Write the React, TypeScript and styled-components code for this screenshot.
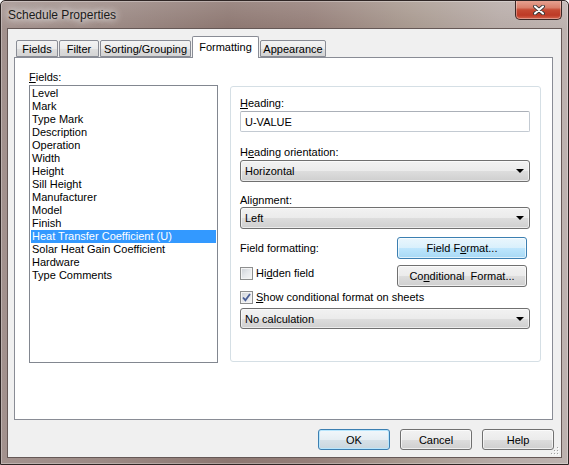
import styled, { createGlobalStyle } from "styled-components";

const GlobalStyle = createGlobalStyle`
  html, body {
    margin: 0;
    padding: 0;
    background: #ffffff;
  }
  body {
    font-family: "Liberation Sans", Arial, sans-serif;
    font-size: 11px;
    color: #000000;
  }
  * {
    box-sizing: border-box;
  }
`;

const fields = [
  "Level",
  "Mark",
  "Type Mark",
  "Description",
  "Operation",
  "Width",
  "Height",
  "Sill Height",
  "Manufacturer",
  "Model",
  "Finish",
  "Heat Transfer Coefficient (U)",
  "Solar Heat Gain Coefficient",
  "Hardware",
  "Type Comments",
];

const tabs = [
  { label: "Fields", width: 42 },
  { label: "Filter", width: 40 },
  { label: "Sorting/Grouping", width: 91 },
  { label: "Formatting", width: 67, active: true },
  { label: "Appearance", width: 66 },
];

const CloseGlyph = () => (
  <svg width="12" height="10" viewBox="0 0 12 10">
    <path d="M2 1.5 L10 8.5 M10 1.5 L2 8.5" stroke="#3a3a3a" strokeWidth="3.8" strokeLinecap="round" />
    <path d="M2 1.5 L10 8.5 M10 1.5 L2 8.5" stroke="#ffffff" strokeWidth="2.1" strokeLinecap="round" />
  </svg>
);

const CheckMark = () => (
  <svg width="9" height="9" viewBox="0 0 9 9">
    <path d="M1 4.5 L3.4 7.2 L8 1" stroke="#4a5f97" strokeWidth="1.8" fill="none" />
  </svg>
);

const Grip = () => (
  <svg width="10" height="10" viewBox="0 0 10 10">
    {[
      [8, 2],
      [5, 5],
      [8, 5],
      [2, 8],
      [5, 8],
      [8, 8],
    ].map(([x, y]) => (
      <g key={`${x}-${y}`}>
        <rect x={x} y={y} width="1" height="1" fill="#ffffff" />
        <rect x={x - 1} y={y - 1} width="1" height="1" fill="#a0a0a0" />
      </g>
    ))}
  </svg>
);

const App = () => {
  return (
    <>
      <GlobalStyle />
      <Window>
        <TitleBar>
          <Title>Schedule Properties</Title>
          <CloseButton>
            <CloseGlyph />
          </CloseButton>
        </TitleBar>
        <Client>
          <TabStrip>
            {tabs.map((t) => (
              <Tab key={t.label} $active={!!t.active} $width={t.width}>
                {t.label}
              </Tab>
            ))}
          </TabStrip>
          <TabPanel>
            <FieldsColumn>
              <Label>
                <Key>F</Key>ields:
              </Label>
              <ListBox>
                {fields.map((f) => (
                  <ListItem key={f} $selected={f === "Heat Transfer Coefficient (U)"}>
                    {f}
                  </ListItem>
                ))}
              </ListBox>
            </FieldsColumn>
            <GroupBox>
              <Label $top={10}>
                <Key>H</Key>eading:
              </Label>
              <TextInput $top={1}>U-VALUE</TextInput>

              <Label $top={14}>
                H<Key>e</Key>ading orientation:
              </Label>
              <Combo $top={1}>
                Horizontal
                <Arrow />
              </Combo>

              <Label $top={12}>Alignment:</Label>
              <Combo $top={0}>
                Left
                <Arrow />
              </Combo>

              <ButtonRow $top={8}>
                <span>Field formatting:</span>
                <PushButton $variant="hover">
                  Field F<Key>o</Key>rmat...
                </PushButton>
              </ButtonRow>

              <ButtonRow $top={6} $alignTop>
                <CheckRow $top={2}>
                  <CheckBox />
                  <span>
                    Hi<Key>d</Key>den field
                  </span>
                </CheckRow>
                <PushButton>
                  Co<Key>n</Key>ditional&nbsp; Format...
                </PushButton>
              </ButtonRow>

              <CheckRow $top={4}>
                <CheckBox>
                  <CheckMark />
                </CheckBox>
                <span>
                  <Key>S</Key>how conditional format on sheets
                </span>
              </CheckRow>

              <Combo $top={4} $height={21}>
                No calculation
                <Arrow />
              </Combo>
            </GroupBox>
          </TabPanel>
          <DialogButtons>
            <DialogButton $default>OK</DialogButton>
            <DialogButton>Cancel</DialogButton>
            <DialogButton>Help</DialogButton>
          </DialogButtons>
          <GripCorner>
            <Grip />
          </GripCorner>
        </Client>
      </Window>
    </>
  );
};

const Window = styled.div`
  width: 569px;
  height: 465px;
  display: flex;
  flex-direction: column;
  border: 1px solid #2f2625;
  border-radius: 5px 5px 0 0;
  overflow: hidden;
  background:
    linear-gradient(180deg, rgba(255, 255, 255, 0.14) 0px, rgba(255, 255, 255, 0) 28px),
    linear-gradient(90deg, #a3928e 0%, #9c8a85 18%, #8d7771 40%, #957f79 55%, #a8998f 72%, #b7aba7 88%, #bdb2af 100%);
  box-shadow: inset 0 0 0 1px rgba(255, 255, 255, 0.3);
`;

const TitleBar = styled.div`
  height: 27px;
  display: flex;
  justify-content: space-between;
  align-items: flex-start;
  padding-left: 7px;
`;

const Title = styled.div`
  font-size: 12px;
  line-height: 28px;
  color: #1a1a1a;
  text-shadow:
    0 0 6px rgba(255, 255, 255, 0.9),
    0 0 10px rgba(255, 255, 255, 0.7),
    0 0 16px rgba(255, 255, 255, 0.5);
`;

const CloseButton = styled.div`
  width: 47px;
  height: 20px;
  margin-top: -1px;
  margin-right: 6px;
  display: flex;
  align-items: center;
  justify-content: center;
  border: 1px solid #3c2826;
  border-top: none;
  border-radius: 0 0 5px 5px;
  background: linear-gradient(180deg, #e8a696 0%, #d9806b 40%, #c64a33 52%, #bd3a26 80%, #d6654d 100%);
  box-shadow: inset 0 0 0 1px rgba(255, 255, 255, 0.35);
`;

const Client = styled.div`
  position: relative;
  height: 430px;
  margin: 0 6px;
  border: 1px solid #655856;
  background: #f0f0f0;
  padding: 7px 8px 0 6px;
  display: flex;
  flex-direction: column;
`;

const TabStrip = styled.div`
  height: 22px;
  margin-bottom: -1px;
  padding-left: 2px;
  display: flex;
  align-items: flex-end;
  gap: 1px;
`;

const Tab = styled.div<{ $active: boolean; $width: number }>`
  position: relative;
  width: ${(p) => p.$width}px;
  height: ${(p) => (p.$active ? 22 : 17)}px;
  margin-bottom: ${(p) => (p.$active ? 0 : 1)}px;
  margin-left: ${(p) => (p.$active ? -1 : 0)}px;
  z-index: ${(p) => (p.$active ? 2 : 0)};
  display: flex;
  align-items: center;
  justify-content: center;
  padding-bottom: ${(p) => (p.$active ? 1 : 0)}px;
  border: 1px solid #898c95;
  border-bottom: ${(p) => (p.$active ? "none" : "1px solid #898c95")};
  border-radius: 2px 2px 0 0;
  white-space: nowrap;
  background: ${(p) =>
    p.$active ? "#ffffff" : "linear-gradient(180deg, #f3f3f3 0%, #ebebeb 50%, #dedede 51%, #d4d4d4 100%)"};

  & + & {
    margin-left: ${(p) => (p.$active ? -1 : 0)}px;
  }
`;

const TabPanel = styled.div`
  position: relative;
  z-index: 1;
  height: 363px;
  border: 1px solid #898c95;
  background: #ffffff;
  display: flex;
  align-items: flex-start;
  padding: 13px 0 0 14px;
`;

const FieldsColumn = styled.div`
  width: 189px;
  display: flex;
  flex-direction: column;
`;

const Label = styled.div<{ $top?: number }>`
  line-height: 13px;
  margin-top: ${(p) => p.$top ?? 0}px;
  white-space: nowrap;
`;

const Key = styled.span`
  text-decoration: underline;
  text-underline-offset: 1px;
`;

const ListBox = styled.div`
  margin-top: 1px;
  height: 278px;
  border: 1px solid #828790;
  padding: 1px;
`;

const ListItem = styled.div<{ $selected: boolean }>`
  line-height: 13px;
  height: 13px;
  padding-left: 1px;
  white-space: nowrap;
  background: ${(p) => (p.$selected ? "#3399ff" : "transparent")};
  color: ${(p) => (p.$selected ? "#ffffff" : "#000000")};
`;

const GroupBox = styled.div`
  width: 311px;
  height: 276px;
  margin: 15px 0 0 12px;
  border: 1px solid #d5dfe5;
  border-radius: 3px;
  padding: 0 0 0 9px;
  display: flex;
  flex-direction: column;
`;

const TextInput = styled.div<{ $top?: number }>`
  width: 290px;
  height: 21px;
  margin-top: ${(p) => p.$top ?? 0}px;
  border: 1px solid #c3cad2;
  border-top-color: #abb0b8;
  border-radius: 2px;
  padding-left: 4px;
  display: flex;
  align-items: center;
  background: #ffffff;
`;

const Combo = styled.div<{ $top?: number; $height?: number }>`
  width: 290px;
  height: ${(p) => p.$height ?? 22}px;
  margin-top: ${(p) => p.$top ?? 0}px;
  border: 1px solid #707070;
  border-radius: 3px;
  padding: 0 5px 0 4px;
  display: flex;
  align-items: center;
  justify-content: space-between;
  background: linear-gradient(180deg, #f2f2f2 0%, #ebebeb 50%, #dddddd 51%, #cfcfcf 100%);
  box-shadow: inset 0 0 0 1px rgba(255, 255, 255, 0.6);
`;

const Arrow = styled.span`
  width: 0;
  height: 0;
  border-left: 4px solid transparent;
  border-right: 4px solid transparent;
  border-top: 4px solid #000000;
`;

const ButtonRow = styled.div<{ $top?: number; $alignTop?: boolean }>`
  width: 290px;
  margin-top: ${(p) => p.$top ?? 0}px;
  padding-right: 3px;
  display: flex;
  justify-content: space-between;
  align-items: ${(p) => (p.$alignTop ? "flex-start" : "center")};
`;

const PushButton = styled.div<{ $variant?: "hover" }>`
  width: 130px;
  height: 22px;
  border: 1px solid ${(p) => (p.$variant === "hover" ? "#3c7fb1" : "#707070")};
  border-radius: 3px;
  display: flex;
  align-items: center;
  justify-content: center;
  white-space: nowrap;
  background: ${(p) =>
    p.$variant === "hover"
      ? "linear-gradient(180deg, #eaf6fd 0%, #d9f0fc 50%, #bee6fd 51%, #a7d9f5 100%)"
      : "linear-gradient(180deg, #f2f2f2 0%, #ebebeb 50%, #dddddd 51%, #cfcfcf 100%)"};
  box-shadow: inset 0 0 0 1px rgba(255, 255, 255, 0.65);
`;

const CheckRow = styled.div<{ $top?: number }>`
  margin-top: ${(p) => p.$top ?? 0}px;
  display: flex;
  align-items: center;
  gap: 3px;
  line-height: 13px;
  white-space: nowrap;
`;

const CheckBox = styled.span`
  width: 13px;
  height: 13px;
  flex-shrink: 0;
  border: 1px solid #8e8f8f;
  display: flex;
  align-items: center;
  justify-content: center;
  background: linear-gradient(135deg, #cbcfd5 0%, #e6e8eb 50%, #f6f6f6 100%);
  box-shadow: inset 0 0 0 1px #f4f4f4;
`;

const DialogButtons = styled.div`
  margin-top: 9px;
  margin-right: -1px;
  display: flex;
  justify-content: flex-end;
  gap: 10px;
`;

const DialogButton = styled.div<{ $default?: boolean }>`
  width: 72px;
  height: 21px;
  border: 1px solid ${(p) => (p.$default ? "#3c7fb1" : "#707070")};
  border-radius: 3px;
  display: flex;
  align-items: center;
  justify-content: center;
  background: ${(p) =>
    p.$default
      ? "linear-gradient(180deg, #f1f7fb 0%, #e6eef3 50%, #d6e1e8 51%, #c9d6de 100%)"
      : "linear-gradient(180deg, #f2f2f2 0%, #ebebeb 50%, #dddddd 51%, #cfcfcf 100%)"};
  box-shadow: ${(p) =>
    p.$default ? "inset 0 0 0 1px #b8e6fd" : "inset 0 0 0 1px rgba(255, 255, 255, 0.65)"};
`;

const GripCorner = styled.div`
  position: absolute;
  right: 1px;
  bottom: 1px;
  width: 10px;
  height: 10px;
  display: flex;
`;

export default App;
